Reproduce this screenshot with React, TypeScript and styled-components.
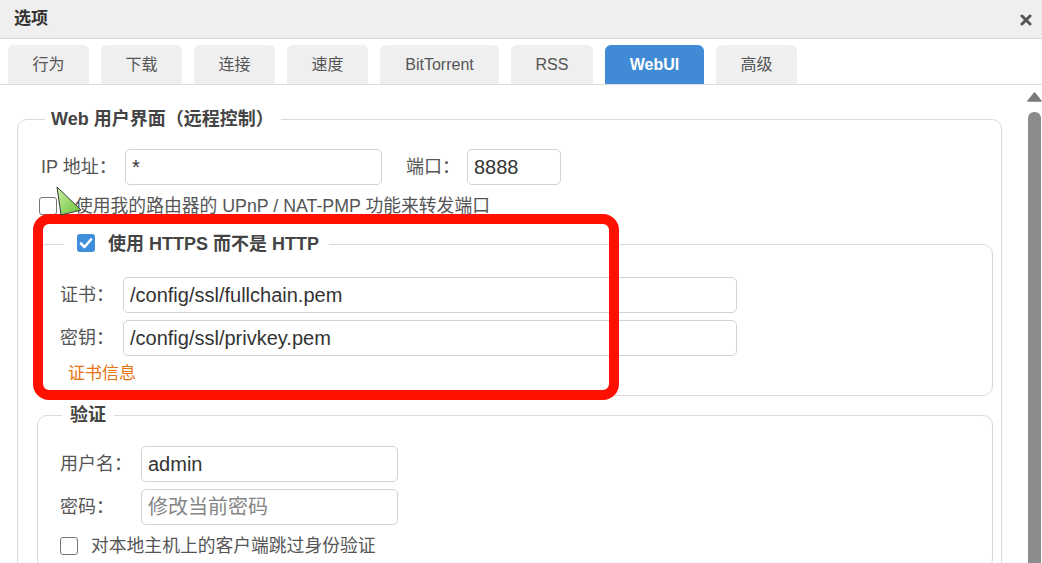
import React from "react";
import styled, { createGlobalStyle } from "styled-components";

const GlobalStyle = createGlobalStyle`
  html, body { margin: 0; padding: 0; background: #fff; }
  body { font-family: "Liberation Sans", "Noto Sans CJK SC", sans-serif; }
  * { box-sizing: border-box; }
`;

const Window = styled.div`
  position: relative;
  width: 1042px;
  height: 563px;
  overflow: hidden;
  display: flex;
  flex-direction: column;
  background: #fff;
`;

const TitleBar = styled.div`
  flex: none;
  height: 39px;
  background: #efefef;
  border-bottom: 1px solid #d6d6d6;
  display: flex;
  align-items: center;
  justify-content: space-between;
  padding: 0 10px 0 14px;
`;

const Title = styled.div`
  font-size: 17px;
  font-weight: bold;
  color: #333;
  line-height: 20px;
`;

const CloseButton = styled.div`
  width: 12px;
  height: 12px;
  display: flex;
  margin-top: 2px;
`;

const TabBar = styled.div`
  flex: none;
  height: 46px;
  padding: 6px 0 0 8px;
  display: flex;
  gap: 12px;
  border-bottom: 1px solid #dcdcdc;
`;

const Tab = styled.div<{ $active?: boolean; $w: number }>`
  width: ${(p) => p.$w}px;
  height: 39px;
  border-radius: 6px 6px 0 0;
  display: flex;
  align-items: center;
  justify-content: center;
  font-size: 16px;
  line-height: 20px;
  background: ${(p) => (p.$active ? "#418bd6" : "#efefef")};
  color: ${(p) => (p.$active ? "#fff" : "#555")};
  font-weight: ${(p) => (p.$active ? "bold" : "normal")};
`;

const Body = styled.div`
  flex: 1;
  min-height: 0;
  display: flex;
`;

const Scroller = styled.div`
  flex: 1;
  min-width: 0;
  overflow: hidden;
  padding: 22px 0 0 17px;
`;

const ScrollTrack = styled.div`
  flex: none;
  width: 15px;
  display: flex;
  flex-direction: column;
  align-items: center;
  padding-top: 7px;
`;

const ScrollThumb = styled.div`
  flex: 1;
  width: 13px;
  margin-top: 10px;
  background: #8c8c8c;
  border-radius: 6px 6px 0 0;
`;

const OuterGroup = styled.fieldset`
  margin: 0;
  width: 985px;
  min-width: 0;
  border: 1px solid #dadada;
  border-radius: 10px;
  padding: 18px 8px 30px 19px;
`;

const InnerGroup = styled.fieldset<{ $mt: number }>`
  margin: ${(p) => p.$mt}px 0 0 0;
  min-width: 0;
  border: 1px solid #dadada;
  border-radius: 10px;
  padding: 19px 8px 11px 22px;
`;

const Legend = styled.legend<{ $ml: number; $pl: number; $pr: number; $h: number }>`
  margin-left: ${(p) => p.$ml}px;
  padding: 0 ${(p) => p.$pr}px 0 ${(p) => p.$pl}px;
  height: ${(p) => p.$h}px;
  line-height: ${(p) => p.$h}px;
  font-size: 18px;
  font-weight: bold;
  color: #444;
  display: flex;
  align-items: center;
  gap: 13px;
`;

const Row = styled.div<{ $mt?: number; $pl?: number }>`
  display: flex;
  align-items: center;
  height: 36px;
  margin-top: ${(p) => p.$mt ?? 0}px;
  padding-left: ${(p) => p.$pl ?? 0}px;
`;

const Label = styled.span<{ $w: number; $ml?: number }>`
  flex: none;
  width: ${(p) => p.$w}px;
  margin-left: ${(p) => p.$ml ?? 0}px;
  font-size: 18px;
  line-height: 22px;
  color: #555;
`;

const TextInput = styled.input<{ $w: number }>`
  flex: none;
  width: ${(p) => p.$w}px;
  height: 36px;
  border: 1px solid #d2d2d2;
  border-radius: 5px;
  padding: 0 6px;
  font-family: "Liberation Sans", "Noto Sans CJK SC", sans-serif;
  font-size: 20px;
  color: #333;
  background: #fff;
  outline: none;
  &::placeholder {
    color: #858585;
  }
`;

const CheckRow = styled.div<{ $mt: number; $pl: number; $gap: number }>`
  display: flex;
  align-items: center;
  height: 22px;
  margin-top: ${(p) => p.$mt}px;
  padding-left: ${(p) => p.$pl}px;
  gap: ${(p) => p.$gap}px;
  font-size: 17.8px;
  line-height: 22px;
  color: #555;
`;

const Box = styled.span<{ $checked?: boolean }>`
  flex: none;
  width: 18px;
  height: 18px;
  border-radius: 3px;
  display: flex;
  align-items: center;
  justify-content: center;
  background: ${(p) => (p.$checked ? "#3f8edc" : "#fff")};
  border: ${(p) => (p.$checked ? "none" : "1.5px solid #767676")};
`;

const LegendBox = styled(Box)`
  margin-bottom: 3px;
`;

const InfoLink = styled.div`
  margin-top: 8px;
  padding-left: 8px;
  font-size: 17px;
  line-height: 20px;
  color: #e8730f;
`;

const Highlight = styled.div`
  position: absolute;
  left: 33px;
  top: 214px;
  width: 586px;
  height: 186px;
  border: 10px solid #ff1000;
  border-radius: 16px;
  pointer-events: none;
`;

const Cursor = styled.svg`
  position: absolute;
  left: 54px;
  top: 185px;
  pointer-events: none;
`;

const Check = () => (
  <svg width="14" height="12" viewBox="0 0 14 12">
    <path d="M2 6.5 L5.5 10 L12 2.5" fill="none" stroke="#fff" strokeWidth="2.6" strokeLinecap="round" strokeLinejoin="round" />
  </svg>
);

const Checkbox = ({ checked, inLegend }: { checked?: boolean; inLegend?: boolean }) =>
  inLegend ? (
    <LegendBox $checked={checked}>{checked && <Check />}</LegendBox>
  ) : (
    <Box $checked={checked}>{checked && <Check />}</Box>
  );

const tabs: [string, number][] = [
  ["行为", 81],
  ["下载", 81],
  ["连接", 81],
  ["速度", 81],
  ["BitTorrent", 119],
  ["RSS", 82],
  ["WebUI", 99],
  ["高级", 81],
];

export default function App() {
  return (
    <>
      <GlobalStyle />
      <Window>
        <TitleBar>
          <Title>选项</Title>
          <CloseButton>
            <svg width="12" height="12" viewBox="0 0 12 12">
              <path d="M2 2 L10 10 M10 2 L2 10" stroke="#555" strokeWidth="3" strokeLinecap="round" />
            </svg>
          </CloseButton>
        </TitleBar>
        <TabBar>
          {tabs.map(([t, w]) => (
            <Tab key={t} $w={w} $active={t === "WebUI"}>
              {t}
            </Tab>
          ))}
        </TabBar>
        <Body>
          <Scroller>
            <OuterGroup>
              <Legend $ml={8} $pl={6} $pr={7} $h={24}>
                Web 用户界面（远程控制）
              </Legend>
              <Row $pl={4}>
                <Label $w={84}>IP 地址：</Label>
                <TextInput $w={257} readOnly value="*" />
                <Label $w={61} $ml={24}>
                  端口：
                </Label>
                <TextInput $w={94} readOnly value="8888" />
              </Row>
              <CheckRow $mt={10} $pl={2} $gap={18}>
                <Checkbox />
                使用我的路由器的 UPnP / NAT-PMP 功能来转发端口
              </CheckRow>
              <InnerGroup $mt={13}>
                <Legend $ml={4} $pl={13} $pr={10} $h={28}>
                  <Checkbox checked inLegend />
                  使用 HTTPS 而不是 HTTP
                </Legend>
                <Row>
                  <Label $w={63}>证书：</Label>
                  <TextInput $w={614} readOnly value="/config/ssl/fullchain.pem" />
                </Row>
                <Row $mt={7}>
                  <Label $w={63}>密钥：</Label>
                  <TextInput $w={614} readOnly value="/config/ssl/privkey.pem" />
                </Row>
                <InfoLink>证书信息</InfoLink>
              </InnerGroup>
              <InnerGroup $mt={7}>
                <Legend $ml={2} $pl={8} $pr={8} $h={24}>
                  验证
                </Legend>
                <Row>
                  <Label $w={81}>用户名：</Label>
                  <TextInput $w={257} readOnly value="admin" />
                </Row>
                <Row $mt={7}>
                  <Label $w={81}>密码：</Label>
                  <TextInput $w={257} readOnly placeholder="修改当前密码" />
                </Row>
                <CheckRow $mt={10} $pl={0} $gap={13}>
                  <Checkbox />
                  对本地主机上的客户端跳过身份验证
                </CheckRow>
              </InnerGroup>
            </OuterGroup>
          </Scroller>
          <ScrollTrack>
            <svg width="15" height="10" viewBox="0 0 15 10">
              <path d="M7.5 1 L14 9 L1 9 Z" fill="#7a7a7a" stroke="#7a7a7a" strokeWidth="1.5" strokeLinejoin="round" />
            </svg>
            <ScrollThumb />
          </ScrollTrack>
        </Body>
        <Highlight />
        <Cursor width="30" height="32" viewBox="0 0 30 32">
          <defs>
            <linearGradient id="cg" x1="0" y1="0" x2="1" y2="1">
              <stop offset="0" stopColor="#c9f0a4" />
              <stop offset="1" stopColor="#69c13a" />
            </linearGradient>
          </defs>
          <polygon points="3,2 27,25 7,30" fill="url(#cg)" stroke="#3a3a3a" strokeWidth="1" strokeLinejoin="round" />
        </Cursor>
      </Window>
    </>
  );
}
